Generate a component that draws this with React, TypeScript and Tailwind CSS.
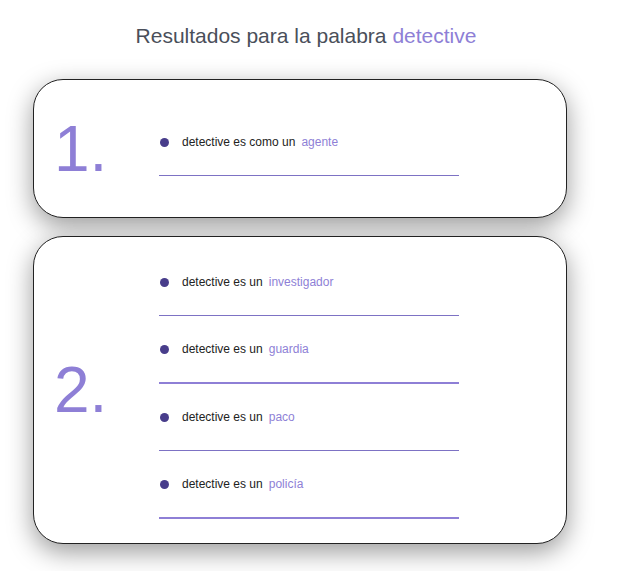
const results = [
  {
    rank: '1.',
    items: [{ text: 'detective es como un', word: 'agente', thick: false }],
    pad: 'pt-[54px] pb-[41px]',
  },
  {
    rank: '2.',
    items: [
      { text: 'detective es un', word: 'investigador', thick: false },
      { text: 'detective es un', word: 'guardia', thick: true },
      { text: 'detective es un', word: 'paco', thick: false },
      { text: 'detective es un', word: 'policía', thick: true },
    ],
    pad: 'pt-[37px] pb-[24px]',
  },
];

export default function App() {
  return (
    <div className="min-h-screen bg-white font-['Liberation_Sans',Arial,sans-serif]">
      <h1 className="w-[612px] pt-[24px] text-center text-[21px] leading-6 text-[#4a4f5a]">
        Resultados para la palabra <span className="text-[#8e7fd6]">detective</span>
      </h1>

      <div className="ml-[33px] mt-[31px] flex w-[534px] flex-col gap-[18px]">
        {results.map((r) => (
          <div
            key={r.rank}
            className="flex items-center rounded-[30px] border border-[#222] bg-white pl-[20px] shadow-[0_8px_26px_rgba(0,0,0,0.4)]"
          >
            <div className="w-[105px] text-[64px] leading-none text-[#8e7fd6]">{r.rank}</div>
            <ul className={`flex w-[300px] flex-col gap-[25px] ${r.pad}`}>
              {r.items.map((it) => (
                <li
                  key={it.word}
                  className={`pb-[25px] ${it.thick ? 'border-b-2 border-[#8e7fd6]' : 'border-b border-[#7d72c4]'}`}
                >
                  <div className="flex h-4 items-center text-[12px] leading-4 text-[#222]">
                    <span className="ml-[1px] mr-[13px] h-[9px] w-[9px] rounded-full bg-[#483d8b]" />
                    <span>{it.text}</span>
                    <span className="ml-[6px] text-[#8e7fd6]">{it.word}</span>
                  </div>
                </li>
              ))}
            </ul>
          </div>
        ))}
      </div>
    </div>
  );
}
